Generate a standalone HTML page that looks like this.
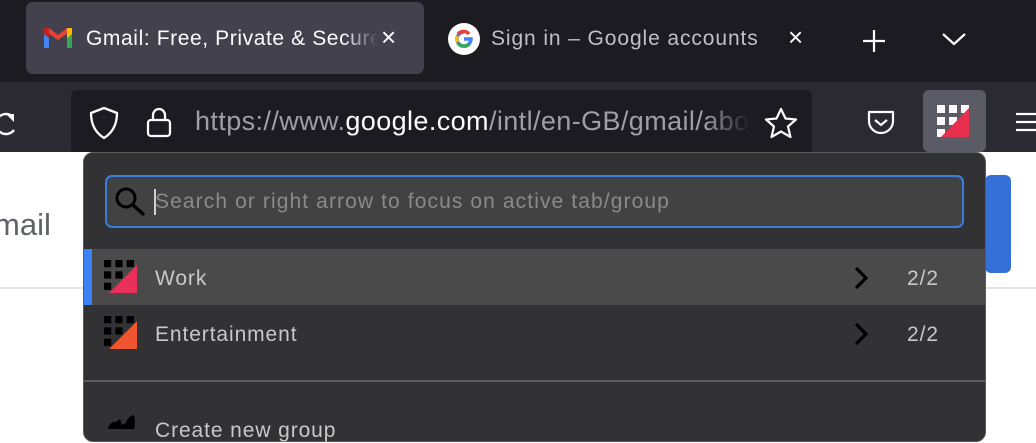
<!DOCTYPE html>
<html><head><meta charset="utf-8"><style>
*{margin:0;padding:0;box-sizing:border-box}
body{width:1036px;height:428px;overflow:hidden;position:relative;background:#fff;font-family:"Liberation Sans",sans-serif}
.abs{position:absolute}
.t{font-size:21px;letter-spacing:0.9px}
</style></head><body>
<!-- tab bar -->
<div class="abs" style="left:0;top:0;width:1036px;height:82px;background:#1c1b22"></div>
<div class="abs" style="left:26px;top:2px;width:398px;height:72px;background:#42414d;border-radius:7px"></div>
<svg class="abs" style="left:42px;top:26px" width="32" height="24" viewBox="0 0 32 24">
<path d="M2 4 L2 22 L7 22 L7 10 Z" fill="#4285f4"/><path d="M25 10 L25 22 L30 22 L30 4 Z" fill="#34a853"/>
<path d="M2 4 L16 14 L30 4 L30 2 L25 2 L16 9 L7 2 L2 2 Z" fill="#ea4335"/><path d="M25 2 L30 2 L30 8 L25 12Z" fill="#fbbc04"/><path d="M2 2 L7 2 L7 12 L2 8Z" fill="#c5221f"/>
</svg>
<div class="abs" style="left:86px;top:27px;width:292px;font-size:21px;letter-spacing:0.6px;color:#fbfbfe;white-space:nowrap;overflow:hidden;-webkit-mask-image:linear-gradient(90deg,#000 88%,transparent)">Gmail: Free, Private &amp; Secure Email</div>
<div class="abs" style="left:381px;top:22px;font-size:26px;color:#fbfbfe">×</div>
<svg class="abs" style="left:448px;top:23px" width="32" height="32" viewBox="0 0 32 32"><circle cx="16" cy="16" r="16" fill="#fff"/>
<path d="M16 9 A7 7 0 1 0 23 16 L16 16" fill="none" stroke="#4285f4" stroke-width="3.5"/><path d="M10 11 A7 7 0 0 1 21 11" fill="none" stroke="#ea4335" stroke-width="3.5"/><path d="M9.5 19 A7 7 0 0 1 9.5 13" fill="none" stroke="#fbbc04" stroke-width="3.5"/><path d="M21 21 A7 7 0 0 1 10 20" fill="none" stroke="#34a853" stroke-width="3.5"/></svg>
<div class="abs" style="left:491px;top:27px;font-size:21px;letter-spacing:0.9px;color:#c0bfc6;white-space:nowrap">Sign in – Google accounts</div>
<div class="abs" style="left:788px;top:22px;font-size:26px;color:#fbfbfe">×</div>
<svg class="abs" style="left:860px;top:27px" width="28" height="28"><path d="M14 3V25M3 14H25" stroke="#fbfbfe" stroke-width="2.2"/></svg>
<svg class="abs" style="left:940px;top:29px" width="28" height="20"><path d="M3 5 L14 15 L25 5" fill="none" stroke="#fbfbfe" stroke-width="2.2"/></svg>
<!-- toolbar -->
<div class="abs" style="left:0;top:82px;width:1036px;height:72px;background:#2b2a33"></div>
<svg class="abs" style="left:-6px;top:110px" width="26" height="30"><path d="M18 6 A10 10 0 1 0 20 20" fill="none" stroke="#fbfbfe" stroke-width="2.4"/><path d="M12 4 L20 4 L20 12Z" fill="#fbfbfe"/></svg>
<div class="abs" style="left:71px;top:90px;width:741px;height:64px;background:#1c1b22;border-radius:6px"></div>
<svg class="abs" style="left:88px;top:106px" width="32" height="34" viewBox="0 0 32 34"><path d="M16 2 L29 7 Q29 24 16 32 Q3 24 3 7 Z" fill="none" stroke="#fbfbfe" stroke-width="2.3" stroke-linejoin="round"/></svg>
<svg class="abs" style="left:145px;top:105px" width="28" height="34"><rect x="3" y="15" width="22" height="16" rx="3" fill="none" stroke="#fbfbfe" stroke-width="2.3"/><path d="M8 15 V10 A6 6 0 0 1 20 10 V15" fill="none" stroke="#fbfbfe" stroke-width="2.3"/></svg>
<div class="abs" style="left:195px;top:106px;width:555px;font-size:27px;letter-spacing:0.4px;color:#9f9ea6;white-space:nowrap;overflow:hidden;-webkit-mask-image:linear-gradient(90deg,#000 92%,transparent)">https://www.<span style="color:#fbfbfe">google.com</span>/intl/en-GB/gmail/about/</div>
<svg class="abs" style="left:763px;top:106px" width="36" height="34" viewBox="0 0 36 34"><path d="M18 3 L22.5 12.5 L33 13.5 L25 20.5 L27.5 31 L18 25.5 L8.5 31 L11 20.5 L3 13.5 L13.5 12.5 Z" fill="none" stroke="#fbfbfe" stroke-width="2.2" stroke-linejoin="round"/></svg>
<svg class="abs" style="left:866px;top:109px" width="30" height="28"><path d="M3 3 H27 V12 A12 12 0 0 1 3 12 Z" fill="none" stroke="#fbfbfe" stroke-width="2.2" stroke-linejoin="round"/><path d="M9 11 L15 16 L21 11" fill="none" stroke="#fbfbfe" stroke-width="2.2"/></svg>
<div class="abs" style="left:923px;top:90px;width:63px;height:62px;background:#5b5b66;border-radius:6px"></div>
<svg class="abs" style="left:937px;top:105px" width="34" height="34" viewBox="0 0 34 34"><g fill="#fbfbfe"><rect x="0" y="0" width="8" height="8"/><rect x="12" y="0" width="8" height="8"/><rect x="24" y="0" width="8" height="8"/><rect x="0" y="12" width="8" height="8"/><rect x="12" y="12" width="8" height="8"/><rect x="0" y="24" width="8" height="8"/></g><path d="M4 32 L32 3 L32 32Z" fill="#e8304e"/></svg>
<svg class="abs" style="left:1014px;top:110px" width="22" height="24"><path d="M2 4H22M2 12H22M2 20H22" stroke="#fbfbfe" stroke-width="2.2"/></svg>
<!-- page -->
<div class="abs" style="left:0;top:152px;width:1036px;height:276px;background:#fff"></div>
<div class="abs" style="left:-6px;top:207px;font-size:31px;color:#5f6368">mail</div>
<div class="abs" style="left:0;top:287px;width:1036px;height:2px;background:#e3e3e3"></div>
<div class="abs" style="left:985px;top:175px;width:26px;height:98px;background:#3470d8;border-radius:6px"></div>
<!-- popup -->
<div class="abs" style="left:83px;top:152px;width:903px;height:290px;background:#323234;border-radius:10px;border:1px solid #5a5a5e"></div>
<div class="abs" style="left:105px;top:175px;width:859px;height:53px;background:#424242;border:2px solid #3b7ddd;border-radius:7px"></div>
<svg class="abs" style="left:113px;top:184px" width="34" height="34"><circle cx="13" cy="14" r="9" fill="none" stroke="#000" stroke-width="3"/><path d="M20 21 L30 30" stroke="#000" stroke-width="3.4" stroke-linecap="round"/></svg>
<div class="abs" style="left:154px;top:189px;width:2px;height:26px;background:#d0d0d0"></div>
<div class="abs t" style="left:155px;top:190px;color:#8a8a8c;white-space:nowrap;letter-spacing:1.1px">Search or right arrow to focus on active tab/group</div>
<div class="abs" style="left:84px;top:249px;width:901px;height:56px;background:#4a4a4a"></div>
<div class="abs" style="left:84px;top:249px;width:8px;height:56px;background:#3b82f6"></div>
<svg class="abs" style="left:104px;top:260px" width="33" height="33" viewBox="0 0 32 32"><g fill="#000"><rect x="0" y="0" width="7" height="7"/><rect x="11" y="0" width="7" height="7"/><rect x="22" y="0" width="7" height="7"/><rect x="0" y="11" width="7" height="7"/><rect x="11" y="11" width="7" height="7"/><rect x="0" y="22" width="7" height="7"/></g><path d="M5 32 L32 5 L32 32Z" fill="#e8305a"/></svg>
<div class="abs t" style="left:155px;top:267px;color:#c8c8c8">Work</div>
<svg class="abs" style="left:852px;top:265px" width="18" height="26"><path d="M4 3 L14 13 L4 23" fill="none" stroke="#000" stroke-width="3.2"/></svg>
<div class="abs t" style="left:907px;top:267px;color:#c8c8c8">2/2</div>
<svg class="abs" style="left:104px;top:316px" width="33" height="33" viewBox="0 0 32 32"><g fill="#000"><rect x="0" y="0" width="7" height="7"/><rect x="11" y="0" width="7" height="7"/><rect x="22" y="0" width="7" height="7"/><rect x="0" y="11" width="7" height="7"/><rect x="11" y="11" width="7" height="7"/><rect x="0" y="22" width="7" height="7"/></g><path d="M5 32 L32 5 L32 32Z" fill="#ee5530"/></svg>
<div class="abs t" style="left:155px;top:323px;color:#c8c8c8">Entertainment</div>
<svg class="abs" style="left:852px;top:321px" width="18" height="26"><path d="M4 3 L14 13 L4 23" fill="none" stroke="#000" stroke-width="3.2"/></svg>
<div class="abs t" style="left:907px;top:323px;color:#c8c8c8">2/2</div>
<div class="abs" style="left:84px;top:380px;width:901px;height:2px;background:#5c5c60"></div>
<svg class="abs" style="left:106px;top:413px" width="34" height="16"><path d="M2 16 Q4 8 10 9 L14 6 L16 12 L20 10 Q22 3 28 2 Q30 10 28 16Z" fill="#000"/></svg>
<div class="abs t" style="left:155px;top:419px;color:#c8c8c8">Create new group</div>
</body></html>
